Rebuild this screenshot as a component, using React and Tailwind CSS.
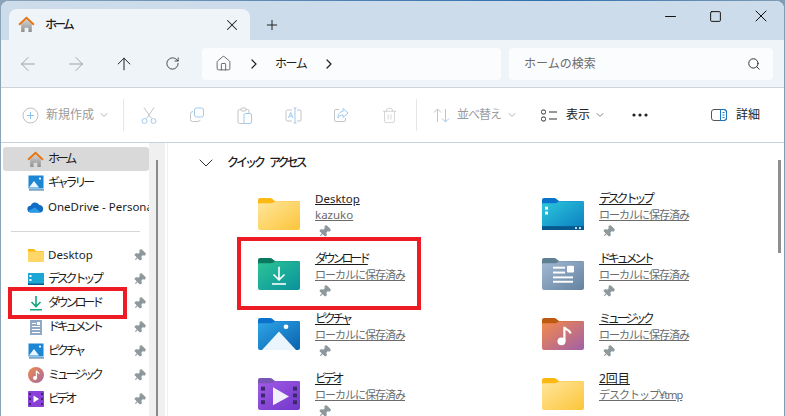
import React from "react";
import {
  ArrowLeft,
  ArrowRight,
  ArrowUp,
  RotateCw,
  Home,
  ChevronRight,
  ChevronDown,
  Search,
  X,
  Plus,
  Minus,
  Square,
  Trash2,
  Pin,
} from "lucide-react";

const font = "font-['Noto_Sans','Noto_Sans_CJK_JP',sans-serif]";

// katakana labels sit much tighter in the reference than the CJK font does
const nameCls = (label) => {
  if (/[ァ-ヿ]/.test(label)) return "text-[12px] tracking-[-3.2px]";
  if (/^[A-Za-z]/.test(label)) return "text-[11.5px]";
  return "text-[12px]";
};

const HomeColor = ({ size = 17 }) => (
  <svg width={size} height={size} viewBox="0 0 16 16">
    <defs>
      <linearGradient id="homeBody" x1="0" y1="0" x2="0" y2="1">
        <stop offset="0" stopColor="#d4d4d4" />
        <stop offset="1" stopColor="#8f8f8f" />
      </linearGradient>
    </defs>
    <path d="M3 7.500 8 3l5 4.500V15h-3.200v-4H6.200v4H3z" fill="url(#homeBody)" />
    <path d="M1 8.200 8 1.600l7 6.600" fill="none" stroke="#e8740f" strokeWidth="1.800" />
  </svg>
);

const GalleryIcon = () => (
  <svg width="16" height="16" viewBox="0 0 16 16">
    <rect x="0.500" y="0.500" width="15" height="13" fill="#1b86d4" />
    <circle cx="12" cy="3.600" r="1.100" fill="#fff" />
    <path d="M1 12.500 6 6l5 6.500z" fill="#eaf5fd" />
    <rect x="1" y="14.200" width="15" height="1.400" fill="#5a8fb8" />
  </svg>
);

const CloudIcon = () => (
  <svg width="17" height="12" viewBox="0 0 17 12">
    <path d="M4 11.500a3.400 3.400 0 0 1-.4-6.800A4.800 4.800 0 0 1 12.400 4 3.800 3.800 0 0 1 13.200 11.500z" fill="#0f6cc4" />
    <path d="M4 11.500c-1 0-2-.5-2.800-1.600L8 6.500l6 5z" fill="#2a9be6" />
  </svg>
);

const Folder = ({ back, from, to, children }) => (
  <svg width={42} height={33} viewBox="0 0 42 34" preserveAspectRatio="none">
    <defs>
      <linearGradient id={from + to} x1="0" y1="0" x2="1" y2="1">
        <stop offset="0" stopColor={from} />
        <stop offset="1" stopColor={to} />
      </linearGradient>
    </defs>
    <path d="M0 3a2 2 0 0 1 2-2h10c2 0 3 2 5 3h23a2 2 0 0 1 2 2v6H0z" fill={back} />
    <path d="M0 7.500a1 1 0 0 1 1-1h12c2 0 3-1 4-2h24a1 1 0 0 1 1 1V32a2 2 0 0 1-2 2H2a2 2 0 0 1-2-2z" fill={"url(#" + from + to + ")"} />
    {children}
  </svg>
);

const YellowFolder = () => <Folder back="#fdb913" from="#ffe69c" to="#fcc53a" />;
const DesktopFolder = () => (
  <Folder back="#0b72cc" from="#2cc8dc" to="#0a7cc0">
    <rect x="0" y="30" width="42" height="4" fill="#085a8e" />
    <rect x="3" y="10" width="3" height="3" fill="#fff" />
    <rect x="3" y="15" width="3" height="3" fill="#fff" />
    <rect x="33" y="31" width="2" height="2" fill="#cde" />
    <rect x="37" y="31" width="2" height="2" fill="#cde" />
  </Folder>
);
const DownloadFolder = () => (
  <Folder back="#0b7860" from="#2cc596" to="#0a919c">
    <path d="M21 10v13M15.500 18l5.500 5.500 5.500-5.500" fill="none" stroke="#fff" strokeWidth="1.600" />
    <rect x="14" y="27" width="14" height="1.600" fill="#fff" />
  </Folder>
);
const DocFolder = () => (
  <Folder back="#5f7f92" from="#a2b9d4" to="#64829f">
    <rect x="11" y="10" width="12" height="2" fill="#fff" />
    <rect x="11" y="15" width="12" height="2" fill="#fff" />
    <rect x="25" y="9" width="7" height="7" rx="1" fill="#fff" />
    <rect x="11" y="20" width="20" height="2" fill="#fff" />
    <rect x="11" y="24.500" width="20" height="2" fill="#fff" />
  </Folder>
);
const PicFolder = () => (
  <Folder back="#0b72cc" from="#2ea5e8" to="#0a62ae">
    <circle cx="28" cy="10" r="2.400" fill="#fff" />
    <path d="M4 34 21 15l17 19z" fill="#eaf5fd" />
  </Folder>
);
const MusicFolder = () => (
  <Folder back="#bd5a10" from="#f58a4a" to="#a060a8">
    <circle cx="19.500" cy="25" r="4" fill="#fff" />
    <path d="M22.400 25V10c0 3 6 3 6 7" fill="none" stroke="#fff" strokeWidth="2.200" />
  </Folder>
);
const VideoFolder = () => (
  <Folder back="#7a55b8" from="#a25ae8" to="#7038c8">
    <path d="M15 10.500 31 20 15 29z" fill="#f2f0fa" />
    <rect x="3" y="10" width="4" height="4" fill="#3a2a6a" />
    <rect x="3" y="17" width="4" height="4" fill="#3a2a6a" />
    <rect x="3" y="24" width="4" height="4" fill="#3a2a6a" />
    <rect x="35" y="10" width="4" height="4" fill="#3a2a6a" />
    <rect x="35" y="17" width="4" height="4" fill="#3a2a6a" />
    <rect x="35" y="24" width="4" height="4" fill="#3a2a6a" />
  </Folder>
);

const PinMark = ({ className = "" }) => (
  <Pin size={13} fill="#8d979c" stroke="#8d979c" className={"rotate-45 shrink-0 " + className} />
);

const ToolIcon = ({ children }) => (
  <div className="w-[48px] flex items-center justify-center">{children}</div>
);

const sideTop = [
  { icon: <HomeColor />, label: "ホーム", active: true },
  { icon: <GalleryIcon />, label: "ギャラリー" },
  { icon: <CloudIcon />, label: "OneDrive - Personal" },
];

const SmallDl = () => (
  <svg width="14" height="16" viewBox="0 0 14 16">
    <path d="M7 1v10M2.500 7 7 11.500 11.500 7" fill="none" stroke="#15a67e" strokeWidth="1.600" />
    <rect x="1" y="14" width="12" height="1.500" fill="#15a67e" />
  </svg>
);
const SmallDoc = () => (
  <svg width="16" height="16" viewBox="0 0 16 16">
    <rect x="2" y="1" width="12" height="15" fill="#8ea8c6" />
    <rect x="4" y="4" width="4" height="1" fill="#fff" />
    <rect x="4" y="7" width="8" height="1" fill="#fff" />
    <rect x="4" y="10" width="8" height="1" fill="#fff" />
    <rect x="4" y="13" width="8" height="1" fill="#fff" />
    <rect x="9" y="3" width="3" height="3" fill="#fff" />
  </svg>
);
const SmallMusic = () => (
  <svg width="16" height="16" viewBox="0 0 16 16">
    <defs>
      <linearGradient id="mus" x1="0" y1="0" x2="1" y2="1">
        <stop offset="0" stopColor="#ef8a4a" />
        <stop offset="1" stopColor="#a86aa0" />
      </linearGradient>
    </defs>
    <circle cx="8" cy="8" r="8" fill="url(#mus)" />
    <circle cx="7" cy="11" r="2" fill="#fff" />
    <path d="M8.400 11V3.500c0 1.500 2.600 1.500 2.600 3.500" fill="none" stroke="#fff" strokeWidth="1.200" />
  </svg>
);
const SmallVideo = () => (
  <svg width="16" height="16" viewBox="0 0 16 16">
    <rect width="16" height="16" rx="1" fill="#8a3fd8" />
    <path d="M5.500 4.500 11 8l-5.500 3.500z" fill="#fff" />
    <rect x="1" y="2" width="2" height="2" fill="#3a2a6a" />
    <rect x="1" y="7" width="2" height="2" fill="#3a2a6a" />
    <rect x="1" y="12" width="2" height="2" fill="#3a2a6a" />
    <rect x="13" y="2" width="2" height="2" fill="#3a2a6a" />
    <rect x="13" y="7" width="2" height="2" fill="#3a2a6a" />
    <rect x="13" y="12" width="2" height="2" fill="#3a2a6a" />
  </svg>
);
const SmallFolder = () => (
  <svg width="16" height="14" viewBox="0 0 16 14">
    <path d="M0 1h6l2 2h8v2H0z" fill="#fdb913" />
    <rect y="3.500" width="16" height="10.500" rx="1" fill="#fed768" />
  </svg>
);
const SmallDesktop = () => (
  <svg width="16" height="12" viewBox="0 0 16 12">
    <rect width="16" height="12" fill="#1ba6d4" />
    <rect y="10.500" width="16" height="1.500" fill="#0a5a8e" />
    <rect x="1.500" y="2" width="2" height="2" fill="#fff" />
    <rect x="1.500" y="6" width="2" height="2" fill="#fff" />
  </svg>
);

const sidePinned = [
  { icon: <SmallFolder />, label: "Desktop" },
  { icon: <SmallDesktop />, label: "デスクトップ" },
  { icon: <SmallDl />, label: "ダウンロード", marked: true },
  { icon: <SmallDoc />, label: "ドキュメント" },
  { icon: <GalleryIcon />, label: "ピクチャ" },
  { icon: <SmallMusic />, label: "ミュージック" },
  { icon: <SmallVideo />, label: "ビデオ" },
];

const local = "ローカルに保存済み";
const leftCol = [
  { icon: <YellowFolder />, name: "Desktop", sub: "kazuko", pin: true },
  { icon: <DownloadFolder />, name: "ダウンロード", sub: local, pin: true, marked: true },
  { icon: <PicFolder />, name: "ピクチャ", sub: local, pin: true },
  { icon: <VideoFolder />, name: "ビデオ", sub: local, pin: true },
];
const rightCol = [
  { icon: <DesktopFolder />, name: "デスクトップ", sub: local, pin: true },
  { icon: <DocFolder />, name: "ドキュメント", sub: local, pin: true },
  { icon: <MusicFolder />, name: "ミュージック", sub: local, pin: true },
  { icon: <YellowFolder />, name: "2回目", sub: "デスクトップ¥tmp" },
];

const QuickItem = ({ item }) => (
  <div className="relative h-[60px] flex items-start gap-[15px]">
    <div className="mt-[6px] shrink-0">{item.icon}</div>
    <div className="flex flex-col leading-[16px] whitespace-nowrap">
      <span className={"underline text-[#1c1c1c] h-[16px] " + nameCls(item.name)}>{item.name}</span>
      <span className={"underline text-[#6b6b6b] h-[16px] " + (/[ァ-ヿ]/.test(item.sub) ? "text-[11px] tracking-[-1px]" : "text-[11.5px]")}>{item.sub}</span>
      {item.pin && <PinMark className="mt-[2px] ml-[3px]" />}
    </div>
    {item.marked && (
      <div className="absolute left-[-21px] top-[-14px] w-[184px] h-[73px] border-[4px] border-[#ed1c24]" />
    )}
  </div>
);

const Chevron = ({ className = "" }) => (
  <ChevronDown size={12} strokeWidth={1.500} className={"ml-[4px] " + className} />
);

export default function App() {
  return (
    <div className={"w-[785px] h-[416px] overflow-hidden bg-[linear-gradient(90deg,#8aa4b8,#2f6fb0_70%,#7f9db5)] pl-px pt-px " + font}>
      <div className="w-[783px] h-[415px] rounded-t-[8px] overflow-hidden flex flex-col bg-white">
        {/* tab strip */}
        <div className="h-[39px] shrink-0 bg-[#cddcea] flex items-end pl-[8px] relative">
          <div className="w-[241px] h-[31px] bg-[#eff4f9] rounded-t-[8px] flex items-center pl-[9px] pr-[9px] text-[#1a1a1a]">
            <HomeColor />
            <span className="ml-[10px] flex-1 font-medium text-[12px] tracking-[-3px]">ホーム</span>
            <X size={18} strokeWidth={1.400} className="text-[#222]" />
          </div>
          <div className="w-[44px] h-[31px] flex items-center justify-center">
            <Plus size={16} strokeWidth={1.500} className="text-[#222]" />
          </div>
          <div className="absolute right-px top-0 h-[30px] flex items-center text-[#111]">
            <div className="w-[45px] flex justify-center"><Minus size={17} strokeWidth={1.400} /></div>
            <div className="w-[45px] flex justify-center"><Square size={13} strokeWidth={1.800} /></div>
            <div className="w-[45px] flex justify-center"><X size={20} strokeWidth={1.200} /></div>
          </div>
        </div>

        {/* address row */}
        <div className="h-[48px] shrink-0 bg-[#eff4f9] border-b border-[#cdd3da] flex items-center">
          <div className="w-[201px] flex pl-[3px]">
            <div className="w-[48px] flex justify-center"><ArrowLeft size={22} strokeWidth={1} className="text-[#9a9a9a]" /></div>
            <div className="w-[48px] flex justify-center"><ArrowRight size={22} strokeWidth={1} className="text-[#9a9a9a]" /></div>
            <div className="w-[48px] flex justify-center items-center"><ArrowUp size={20} strokeWidth={1.200} className="text-[#222]" /></div>
            <div className="w-[48px] flex justify-center items-center"><RotateCw size={15} strokeWidth={1.400} className="text-[#333]" /></div>
          </div>
          <div className="w-[299px] h-[32px] bg-[#fbfcfe] rounded-[4px] flex items-center pl-[13px] text-[#222]">
            <Home size={17} strokeWidth={1.100} className="text-[#444]" />
            <ChevronRight size={16} strokeWidth={1.800} className="ml-[14px] text-[#222]" />
            <span className="ml-[13px] text-[12px] tracking-[-1.500px]">ホーム</span>
            <ChevronRight size={16} strokeWidth={1.800} className="ml-[15px] text-[#222]" />
          </div>
          <div className="ml-[8px] w-[264px] h-[32px] bg-[#fbfcfe] rounded-[4px] flex items-center pl-[15px] pr-[12px] text-[12px] text-[#6b6b6b]">
            <span className="flex-1">ホームの検索</span>
            <Search size={14} strokeWidth={1.700} className="text-[#333]" />
          </div>
        </div>

        {/* toolbar */}
        <div className="h-[55px] shrink-0 bg-white border-b border-[#c3d3e0] flex items-center text-[12px]">
          <div className="w-[123px] h-[32px] flex items-center border-r border-[#e6e6e6] pl-[21px] text-[#9a9a9a]">
            <svg width="17" height="17" viewBox="0 0 17 17" className="shrink-0">
              <circle cx="8.500" cy="8.500" r="7.500" fill="none" stroke="#bdbdbd" />
              <path d="M8.500 5v7M5 8.500h7" stroke="#8fc3ee" />
            </svg>
            <span className="ml-[7px]">新規作成</span>
            <Chevron />
          </div>
          <div className="flex w-[293px] h-[32px] items-center border-r border-[#e6e6e6] pl-px">
            <ToolIcon>
              <svg width="16" height="17" viewBox="0 0 16 17" fill="none">
                <path d="M3 0.500 10.500 11.500M13 0.500 5.500 11.500" stroke="#c4c4c4" />
                <circle cx="3.500" cy="14" r="2.500" stroke="#9fcaf0" />
                <circle cx="12.500" cy="14" r="2.500" stroke="#9fcaf0" />
              </svg>
            </ToolIcon>
            <ToolIcon>
              <svg width="16" height="16" viewBox="0 0 16 16" fill="none">
                <rect x="5.500" y="1" width="9" height="9" rx="2" stroke="#9fcaf0" />
                <path d="M4 4.500A2.500 2.500 0 0 0 1.500 7v5.500A2 2 0 0 0 3.500 14.500H9a2.500 2.500 0 0 0 2.200-1.500" stroke="#c4c4c4" />
              </svg>
            </ToolIcon>
            <ToolIcon>
              <svg width="16" height="17" viewBox="0 0 16 17" fill="none">
                <rect x="1" y="2.500" width="11" height="14" rx="1.500" stroke="#c4c4c4" />
                <rect x="4" y="1" width="5" height="3" rx="1" fill="#fff" stroke="#c4c4c4" />
                <rect x="7" y="6.500" width="7.500" height="10" rx="1.500" fill="#fff" stroke="#9fcaf0" />
              </svg>
            </ToolIcon>
            <ToolIcon>
              <svg width="17" height="17" viewBox="0 0 17 17" fill="none">
                <path d="M7 3H2.500A1.500 1.500 0 0 0 1 4.500v8A1.500 1.500 0 0 0 2.500 14H7M12 3h3a1 1 0 0 1 1 1v9a1 1 0 0 1-1 1h-3" stroke="#c4c4c4" />
                <path d="M10 1v15M8.500 1h3M8.500 16h3" stroke="#9fcaf0" />
                <path d="M3.500 11 5.700 5.500 8 11M4.300 9.200h2.800" stroke="#9fcaf0" />
              </svg>
            </ToolIcon>
            <ToolIcon>
              <svg width="16" height="16" viewBox="0 0 16 16" fill="none">
                <path d="M6 2.500H3A1.500 1.500 0 0 0 1.500 4v9A1.500 1.500 0 0 0 3 14.500h8a1.500 1.500 0 0 0 1.500-1.500v-2" stroke="#c4c4c4" />
                <path d="M10 1.500 15 6l-5 4.500V8C7.500 8 6 9 5 11c0-4 2-6.500 5-6.500z" stroke="#9fcaf0" />
              </svg>
            </ToolIcon>
            <ToolIcon><Trash2 size={17} strokeWidth={1} className="text-[#c4c4c4]" /></ToolIcon>
          </div>
          <div className="w-[124px] flex items-center pl-[16px] text-[#9a9a9a]">
            <svg width="17" height="15" viewBox="0 0 17 15" fill="none" className="shrink-0">
              <path d="M4.500 14V1M1 4.500 4.500 1 8 4.500" stroke="#c4c4c4" />
              <path d="M12.500 1v13M9 10.500 12.500 14 16 10.500" stroke="#9fcaf0" />
            </svg>
            <span className="ml-[7px] tracking-[-1px]">並べ替え</span>
            <Chevron className="ml-[5px]" />
          </div>
          <div className="w-[91px] flex items-center text-[#222]">
            <svg width="16" height="13" viewBox="0 0 16 13" fill="none" className="shrink-0">
              <rect x="0.500" y="1" width="4" height="4" rx="1.500" stroke="#333" />
              <rect x="0.500" y="8" width="4" height="4" rx="1.500" stroke="#333" />
              <path d="M8 3h8M8 10h8" stroke="#333" />
            </svg>
            <span className="ml-[9px]">表示</span>
            <Chevron className="text-[#555]" />
          </div>
          <svg width="16" height="4" viewBox="0 0 16 4" className="shrink-0">
            <circle cx="2" cy="2" r="1.600" fill="#222" />
            <circle cx="8" cy="2" r="1.600" fill="#222" />
            <circle cx="14" cy="2" r="1.600" fill="#222" />
          </svg>
          <div className="ml-[63px] flex items-center text-[#222]">
            <svg width="16" height="12" viewBox="0 0 16 12" fill="none">
              <rect x="0.500" y="0.500" width="15" height="11" rx="2.500" stroke="#555" />
              <path d="M9.500 0.500h3.500a2.500 2.500 0 0 1 2.500 2.500v6a2.500 2.500 0 0 1-2.500 2.500H9.500z" stroke="#1578c8" />
              <path d="M11.500 3.500h2M11.500 6h2M11.500 8.500h2" stroke="#1578c8" />
            </svg>
            <span className="ml-[9px]">詳細</span>
          </div>
        </div>

        {/* body */}
        <div className="flex-1 flex min-h-0">
          <div className="w-[148px] shrink-0 pl-[2px] pt-[4px] text-[#1c1c1c]">
            {sideTop.map((row) => (
              <div
                key={row.label}
                className={"h-[24px] flex items-center rounded-[3px] pl-[24px] overflow-hidden whitespace-nowrap " + (row.active ? "bg-[#d9d9d9]" : "")}
              >
                <span className="w-[17px] flex justify-center shrink-0">{row.icon}</span>
                <span className={"ml-[4px] " + nameCls(row.label)}>{row.label}</span>
              </div>
            ))}
            <div className="ml-[8px] mr-[9px] mt-[12px] mb-[11px] border-t border-[#d6d6d6]" />
            {sidePinned.map((row) => (
              <div key={row.label} className="relative h-[24px] flex items-center pl-[24px]">
                <span className="w-[17px] flex justify-center shrink-0">{row.icon}</span>
                <span className={"ml-[4px] flex-1 " + nameCls(row.label)}>{row.label}</span>
                <PinMark className="mr-[3px]" />
                {row.marked && (
                  <div className="absolute left-[5px] top-[-4px] w-[119px] h-[32px] border-[4px] border-[#ed1c24]" />
                )}
              </div>
            ))}
          </div>
          <div className="w-[16px] shrink-0 bg-[#f0f0f0] pl-[7px] pt-[17px]">
            <div className="w-[2px] h-full bg-[#8a8a8a]" />
          </div>
          <div className="w-[2px] shrink-0" />
          <div className="flex-1 border-l border-[#f0f0f0] flex flex-col pt-[10px] relative overflow-hidden">
            <div className="flex items-center pl-[26px] text-[#1c1c1c] h-[20px] font-medium">
              <ChevronDown size={24} strokeWidth={1} className="text-[#333] shrink-0" />
              <span className="ml-[9px] text-[12px] tracking-[-3px] [word-spacing:6px]">クイック アクセス</span>
            </div>
            <div className="flex pl-[90px] mt-[18px]">
              <div className="w-[284px]">
                {leftCol.map((item) => <QuickItem key={item.name} item={item} />)}
              </div>
              <div>
                {rightCol.map((item) => <QuickItem key={item.name} item={item} />)}
              </div>
            </div>
            <div className="absolute right-[3px] top-[17px] w-[3px] h-[93px] bg-[#8f8f8f]" />
          </div>
        </div>
      </div>
    </div>
  );
}
